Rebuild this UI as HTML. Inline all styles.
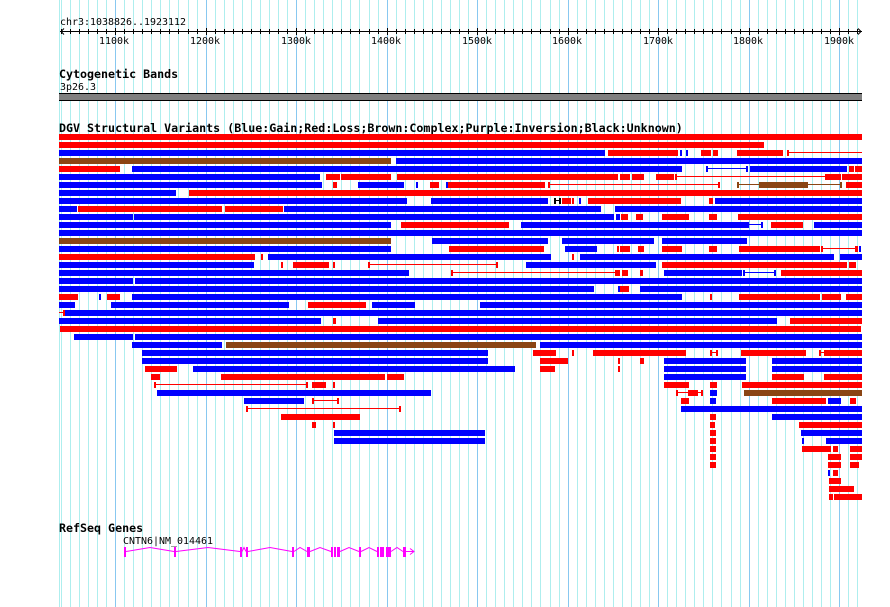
<!DOCTYPE html>
<html lang="en">
<head>
<meta charset="utf-8">
<title>DGV Structural Variants</title>
<style>
html,body{margin:0;padding:0;background:#fff;width:890px;height:607px;overflow:hidden}
svg{display:block}
path{fill:none;shape-rendering:crispEdges}
text{font-family:"DejaVu Sans Mono","Liberation Mono",monospace;font-size:9.97px;fill:#000}
text.b{font-family:"DejaVu Sans Mono","Liberation Mono",monospace;font-size:11.65px;font-weight:bold}
</style>
</head>
<body>
<svg width="890" height="607" viewBox="0 0 890 607" xmlns="http://www.w3.org/2000/svg">
<path stroke="#aeeeee" d="M59.5 0V607M61.5 0V607M70.5 0V607M79.5 0V607M88.5 0V607M97.5 0V607M106.5 0V607M124.5 0V607M133.5 0V607M142.5 0V607M151.5 0V607M160.5 0V607M169.5 0V607M178.5 0V607M188.5 0V607M197.5 0V607M215.5 0V607M224.5 0V607M233.5 0V607M242.5 0V607M251.5 0V607M260.5 0V607M269.5 0V607M278.5 0V607M287.5 0V607M305.5 0V607M314.5 0V607M323.5 0V607M332.5 0V607M341.5 0V607M350.5 0V607M359.5 0V607M369.5 0V607M378.5 0V607M396.5 0V607M405.5 0V607M414.5 0V607M423.5 0V607M432.5 0V607M441.5 0V607M450.5 0V607M459.5 0V607M468.5 0V607M486.5 0V607M495.5 0V607M504.5 0V607M513.5 0V607M522.5 0V607M531.5 0V607M540.5 0V607M550.5 0V607M559.5 0V607M577.5 0V607M586.5 0V607M595.5 0V607M604.5 0V607M613.5 0V607M622.5 0V607M631.5 0V607M640.5 0V607M649.5 0V607M667.5 0V607M676.5 0V607M685.5 0V607M694.5 0V607M703.5 0V607M712.5 0V607M721.5 0V607M731.5 0V607M740.5 0V607M758.5 0V607M767.5 0V607M776.5 0V607M785.5 0V607M794.5 0V607M803.5 0V607M812.5 0V607M821.5 0V607M830.5 0V607M848.5 0V607M857.5 0V607"/>
<path stroke="#88c8f0" d="M115.5 0V607M206.5 0V607M296.5 0V607M387.5 0V607M477.5 0V607M568.5 0V607M658.5 0V607M749.5 0V607M839.5 0V607"/>

<text x="60" y="25">chr3:1038826..1923112</text>
<path stroke="#000" d="M60 31.5H862M61.5 29V34M70.5 29V34M79.5 29V34M88.5 29V34M97.5 29V34M106.5 29V34M115.5 28V35M124.5 29V34M133.5 29V34M142.5 29V34M151.5 29V34M160.5 29V34M169.5 29V34M178.5 29V34M188.5 29V34M197.5 29V34M206.5 28V35M215.5 29V34M224.5 29V34M233.5 29V34M242.5 29V34M251.5 29V34M260.5 29V34M269.5 29V34M278.5 29V34M287.5 29V34M296.5 28V35M305.5 29V34M314.5 29V34M323.5 29V34M332.5 29V34M341.5 29V34M350.5 29V34M359.5 29V34M369.5 29V34M378.5 29V34M387.5 28V35M396.5 29V34M405.5 29V34M414.5 29V34M423.5 29V34M432.5 29V34M441.5 29V34M450.5 29V34M459.5 29V34M468.5 29V34M477.5 28V35M486.5 29V34M495.5 29V34M504.5 29V34M513.5 29V34M522.5 29V34M531.5 29V34M540.5 29V34M550.5 29V34M559.5 29V34M568.5 28V35M577.5 29V34M586.5 29V34M595.5 29V34M604.5 29V34M613.5 29V34M622.5 29V34M631.5 29V34M640.5 29V34M649.5 29V34M658.5 28V35M667.5 29V34M676.5 29V34M685.5 29V34M694.5 29V34M703.5 29V34M712.5 29V34M721.5 29V34M731.5 29V34M740.5 29V34M749.5 28V35M758.5 29V34M767.5 29V34M776.5 29V34M785.5 29V34M794.5 29V34M803.5 29V34M812.5 29V34M821.5 29V34M830.5 29V34M839.5 28V35M848.5 29V34M857.5 29V34"/>
<path stroke="#000" style="shape-rendering:auto" d="M64 28.5L61 31.5L64 34.5M858 28.5L861 31.5L858 34.5"/>
<text x="99" y="44">1100k</text><text x="190" y="44">1200k</text><text x="281" y="44">1300k</text><text x="371" y="44">1400k</text><text x="462" y="44">1500k</text><text x="552" y="44">1600k</text><text x="643" y="44">1700k</text><text x="733" y="44">1800k</text><text x="824" y="44">1900k</text>

<text class="b" x="59" y="78">Cytogenetic Bands</text>
<text x="60" y="90">3p26.3</text>
<path stroke="#808080" stroke-width="8" d="M59 97H862"/>
<path stroke="#000" d="M59 93.5H862M59 100.5H862"/>

<text class="b" x="59" y="132">DGV Structural Variants (Blue:Gain;Red:Loss;Brown:Complex;Purple:Inversion;Black:Unknown)</text>

<path stroke="#f00" stroke-width="6" d="M59 137H862M59 145H764M608 153H678M701 153H711M713 153H718M737 153H783M787 153H789M59 169H120M849 169H854M855 169H862M326 177H340M341 177H391M397 177H618M620 177H630M632 177H644M656 177H674M675 177H677M825 177H841M842 177H862M333 185H337M430 185H439M448 185H545M548 185H550M718 185H720M846 185H862M189 193H862M562 201H571M572 201H574M588 201H681M709 201H713M78 209H222M225 209H283M621 217H628M636 217H643M662 217H689M709 217H717M738 217H862M401 225H509M771 225H803M449 249H544M617 249H619M620 249H630M638 249H644M662 249H682M709 249H717M739 249H820M821 249H823M855 249H858M59 257H255M261 257H263M572 257H574M281 265H283M293 265H329M333 265H335M368 265H370M496 265H498M662 265H847M849 265H856M451 273H453M615 273H620M622 273H628M640 273H643M781 273H862M620 289H629M59 297H78M107 297H120M710 297H712M739 297H820M822 297H841M846 297H862M308 305H366M63 313H65M333 321H336M790 321H862M60 329H861M533 353H556M572 353H574M593 353H686M710 353H712M716 353H718M741 353H806M819 353H821M824 353H862M540 361H568M618 361H620M640 361H644M145 369H177M540 369H555M618 369H620M151 377H160M221 377H385M387 377H404M772 377H804M824 377H862M154 385H156M306 385H308M312 385H326M333 385H335M664 385H689M710 385H717M742 385H862M676 393H678M688 393H698M701 393H703M312 401H314M337 401H339M681 401H689M772 401H826M850 401H856M246 409H248M399 409H401M281 417H360M710 417H716M312 425H316M333 425H335M710 425H715M799 425H862M710 433H716M710 441H716M710 449H716M802 449H831M833 449H838M850 449H862M710 457H716M828 457H841M850 457H862M710 465H716M828 465H841M850 465H859M833 473H838M829 481H841M829 489H854M829 497H833M834 497H862"/>
<path stroke="#f00" d="M789 152.5H862M677 176.5H825M550 184.5H718M823 248.5H855M370 264.5H496M453 272.5H615M59 312.5H63M712 352.5H716M821 352.5H824M156 384.5H306M678 392.5H688M698 392.5H701M314 400.5H337M248 408.5H399"/>

<path stroke="#00f" stroke-width="6" d="M59 153H605M680 153H682M686 153H688M396 161H862M132 169H682M706 169H708M746 169H748M750 169H847M59 177H320M59 185H322M358 185H404M416 185H418M446 185H448M59 193H176M59 201H407M431 201H548M579 201H581M715 201H862M59 209H77M284 209H601M615 209H862M59 217H133M134 217H614M616 217H620M59 225H391M521 225H749M761 225H763M814 225H862M59 233H862M432 241H548M562 241H654M662 241H747M59 249H391M565 249H597M859 249H861M268 257H551M580 257H834M840 257H862M59 265H254M526 265H656M59 273H409M664 273H742M743 273H745M774 273H776M59 281H133M135 281H862M59 289H594M618 289H620M640 289H862M99 297H101M132 297H682M59 305H75M111 305H289M372 305H415M480 305H862M65 313H862M59 321H321M378 321H777M74 337H133M135 337H862M132 345H222M540 345H862M142 353H488M142 361H488M664 361H746M772 361H862M193 369H515M664 369H746M772 369H862M664 377H746M157 393H431M710 393H717M244 401H304M710 401H716M828 401H841M681 409H862M772 417H862M334 433H485M801 433H862M334 441H485M802 441H804M826 441H862M828 473H830"/>
<path stroke="#00f" d="M708 168.5H746M749 224.5H761M745 272.5H774"/>

<path stroke="#8b4513" stroke-width="6" d="M59 161H391M59 241H391M737 185H739M759 185H808M840 185H842M226 345H536M744 393H862"/>
<path stroke="#8b4513" d="M739 184.5H759M808 184.5H840"/>

<path stroke="#000" stroke-width="6" d="M554 201H556M559 201H561"/>
<path stroke="#000" d="M556 200.5H559"/>

<text class="b" x="59" y="532">RefSeq Genes</text>
<text x="123" y="544">CNTN6|NM_014461</text>
<path stroke="#f0f" stroke-width="1" style="shape-rendering:auto" d="M126 551.5L138 549.5L150 547.5L162 549.5L174 551.5M176 551.5L192 549.5L208 547.5L224 549.5L240 551.5M242 551.5L244 547.5L246 551.5M248 551.5L259 549.5L270 547.5L281 549.5L292 551.5M294 551.5L300 547.5L307 551.5M310 551.5L320 547.5L331 551.5M340 551.5L349 547.5L359 551.5M361 551.5L369 547.5L377 551.5M391 551.5L397 547.5L403 551.5M406 551.5H414M410 548.5L414 551.5L410 554.5"/>
<path stroke="#f0f" stroke-width="10" d="M124 552H126M174 552H176M240 552H242M246 552H248M292 552H294M307 552H310M331 552H333M334 552H336M337 552H340M359 552H361M377 552H379M380 552H384M386 552H391M403 552H406"/>
</svg>
</body>
</html>
